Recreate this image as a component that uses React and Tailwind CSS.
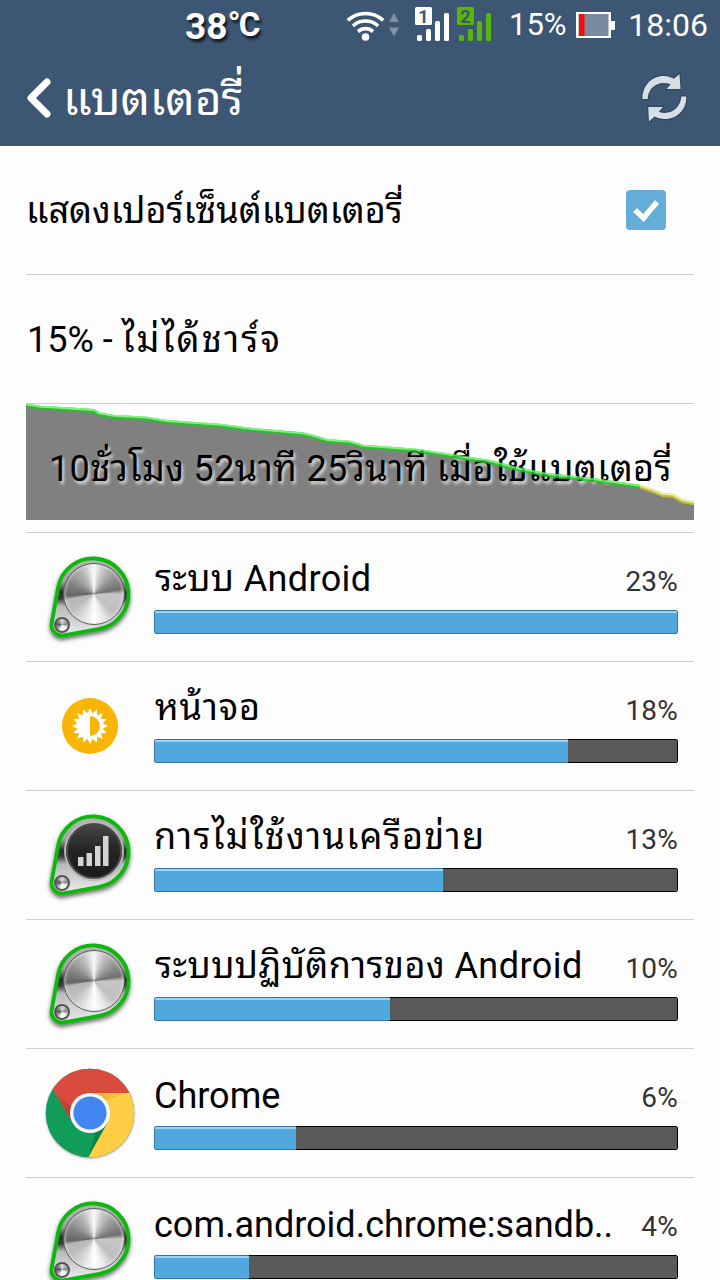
import React from "react";

const apps = [
  { name: "ระบบ Android", percent: 23, bar: 524, icon: "system", text: "pl-px tracking-[0.35px]" },
  { name: "หน้าจอ", percent: 18, bar: 414, icon: "screen", text: "pl-px tracking-[0.8px]" },
  { name: "การไม่ใช้งานเครือข่าย", percent: 13, bar: 289, icon: "network", text: "tracking-[1.3px]" },
  { name: "ระบบปฏิบัติการของ Android", percent: 10, bar: 236, icon: "system", text: "pl-px tracking-[0.45px]" },
  { name: "Chrome", percent: 6, bar: 142, icon: "chrome", text: "pt-px" },
  { name: "com.android.chrome:sandb..", percent: 4, bar: 95, icon: "system", text: "pt-px" },
];

function WifiIcon() {
  return (
    <svg className="h-[34px] w-[40px]" viewBox="0 0 40 34" fill="none" stroke="#fff" strokeWidth="3.6">
      <path d="M1.8 12.4a26 26 0 0 1 35.4 0" />
      <path d="M6.9 18a18.5 18.5 0 0 1 25.2 0" />
      <path d="M12 23.6a11 11 0 0 1 15 0" />
      <circle cx="19.5" cy="29" r="3.8" fill="#fff" stroke="none" />
    </svg>
  );
}

function DataArrows() {
  return (
    <svg className="ml-[2px] h-[26px] w-3" viewBox="0 0 12 26" fill="#8493a5" stroke="#5d7188" strokeWidth="0.8">
      <path d="M6 1l5 9H1z" />
      <path d="M1 15.500h10l-5 9z" />
    </svg>
  );
}

function SignalIcon({ sim, color }) {
  return (
    <svg className="h-[40px] w-[36px]" viewBox="0 -2 36 40" fill={color}>
      <rect x="0" y="0" width="17" height="18" rx="1.500" />
      <rect x="2" y="28" width="5" height="6" rx="1.500" />
      <rect x="11" y="22" width="5" height="12" rx="1.500" />
      <rect x="20" y="14" width="5" height="20" rx="1.500" />
      <rect x="29" y="6" width="5" height="28" rx="1.500" />
      <text x="8.500" y="15.500" textAnchor="middle" fontSize="18" fontWeight="700" fontFamily="Roboto, sans-serif" fill="#3d5673">
        {sim}
      </text>
    </svg>
  );
}

function BatteryIcon() {
  return (
    <svg className="h-[28px] w-[40px]" viewBox="0 0 40 28">
      <path d="M0 1h35v9h4v9h-4v8H0z" fill="#fff" />
      <rect x="2.500" y="3" width="30" height="22" fill="#778a9f" />
      <rect x="3" y="3" width="5.500" height="22" fill="#f70d06" />
    </svg>
  );
}

function RefreshIcon() {
  return (
    <svg className="h-[52px] w-[48px]" viewBox="0 0 48 52">
      <g stroke="#35465c" strokeWidth="2.400" strokeLinejoin="round" fill="#d7dfe6" paintOrder="stroke">
        <path d="M2.500 27C2 11 16.500 0 31 5.500l3 1.300 5.500-4.800 1 15H26.500l4.200-4.700C19 7.500 7.700 15.500 7.700 27z" />
        <path d="M46.200 24.500c.8 15.500-13.700 26.500-28.700 21.200l-2.900-1.300-5.600 5.100-.8-14.500H23l-4.300 4.700C29.500 44 41 36 41.200 24.500z" />
      </g>
    </svg>
  );
}

function KnobIcon({ network }) {
  return (
    <div className="relative h-24 w-[92px]">
      <svg className="absolute inset-0 h-24 w-[92px] overflow-visible" viewBox="0 0 92 96">
        <defs>
          <linearGradient id="plate" x1="0" y1="0" x2="0" y2="1">
            <stop offset="0" stopColor="#b5b5b5" />
            <stop offset="0.3" stopColor="#a2a2a2" />
            <stop offset="0.44" stopColor="#2c2c2c" />
            <stop offset="0.52" stopColor="#3c3c3c" />
            <stop offset="0.62" stopColor="#b9b9b9" />
            <stop offset="1" stopColor="#ededed" />
          </linearGradient>
          <filter id="shade" x="-20%" y="-20%" width="140%" height="150%">
            <feDropShadow dx="0" dy="2.500" stdDeviation="2.200" floodColor="#000" floodOpacity="0.6" />
          </filter>
        </defs>
        <path
          d="M14.100 38.700A35.500 35.500 0 1 1 55.300 79.900L19.900 86.300A10.500 10.500 0 0 1 7.700 74.100Z"
          fill="url(#plate)"
          stroke="#0cb80c"
          strokeWidth="3.800"
          filter="url(#shade)"
        />
      </svg>
      {network ? (
        <div className="absolute left-[22px] top-[16px] size-[56px] rounded-full border-2 border-[#4b4b4b] bg-linear-to-b from-[#464646] via-[#242424] to-[#1b1b1b] shadow-[0_0_0_2px_#b9b9b9]" />
      ) : (
        <div className="absolute left-[19px] top-[14px] size-[62px] rounded-full border border-[#5e5e5e] bg-[conic-gradient(#fafafa_0deg,#c9c9c9_18deg,#9c9c9c_45deg,#6f6f6f_80deg,#c6c6c6_90deg,#c0c0c0_135deg,#ececec_160deg,#fff_180deg,#dedede_205deg,#bcbcbc_235deg,#b8b8b8_258deg,#666_266deg,#858585_295deg,#bcbcbc_335deg,#fafafa_360deg)] shadow-[inset_0_0_2px_2px_rgba(230,230,230,0.4)]" />
      )}
      <div className="absolute left-[10px] top-[68px] size-4 rounded-full border-2 border-[#555] bg-[conic-gradient(#ddd,#888_80deg,#eee_120deg,#fff_190deg,#999_240deg,#555_280deg,#ddd)]" />
      {network && (
        <svg className="absolute left-[33px] top-[28px] h-8 w-8" viewBox="0 0 32 32" fill="#d4d4d4">
          <rect x="1" y="22" width="5.500" height="9" />
          <rect x="9.500" y="18" width="5.500" height="13" />
          <rect x="18" y="11" width="5.500" height="20" />
          <rect x="26" y="1" width="5.500" height="30" />
        </svg>
      )}
    </div>
  );
}

function BrightnessIcon() {
  const points = Array.from({ length: 32 }, (_, i) => {
    const r = i % 2 ? 13 : 18;
    const a = (i * Math.PI) / 16;
    return `${28 + r * Math.sin(a)},${28 - r * Math.cos(a)}`;
  }).join(" ");

  return (
    <svg className="size-14" viewBox="0 0 56 56">
      <circle cx="28" cy="28" r="28" fill="#f9b505" />
      <polygon points={points} fill="#fff" />
      <path d="M28 18a10 10 0 0 1 0 20z" fill="#f9b505" />
    </svg>
  );
}

function ChromeIcon() {
  return (
    <svg className="size-[90px] overflow-visible drop-shadow-[0_1px_1px_rgba(0,0,0,0.35)]" viewBox="-45 -45 90 90">
      <defs>
        <clipPath id="disc">
          <circle r="44.300" />
        </clipPath>
        <linearGradient id="redShade" x1="0" y1="0" x2="1" y2="0">
          <stop offset="0" stopColor="#d94b3d" />
          <stop offset="1" stopColor="#b53b30" />
        </linearGradient>
        <linearGradient id="yellowShade" x1="0" y1="0" x2="1" y2="0">
          <stop offset="0" stopColor="#e6a92b" />
          <stop offset="1" stopColor="#ffce44" />
        </linearGradient>
      </defs>
      <g clipPath="url(#disc)">
        <rect x="-45" y="-45" width="90" height="90" fill="#119d59" />
        <path d="M0-20H45V45H-2L17.300 10z" fill="#ffce44" />
        <path d="M0-20H38L14-12z" fill="url(#yellowShade)" />
        <path d="M-37.500-24L-45-45H45v25H0L-17.300 10z" fill="#d94b3d" />
        <path d="M-36.500-22.700L-20.500 4l2-10z" fill="url(#redShade)" />
        <path d="M17.300 10L-1 42 6 18z" fill="#0e8249" />
      </g>
      <circle r="20" fill="#f6f8fa" />
      <circle r="16.600" fill="#4285f0" />
    </svg>
  );
}

function AppIcon({ type }) {
  if (type === "screen") return <BrightnessIcon />;
  if (type === "chrome") return <ChromeIcon />;
  return <KnobIcon network={type === "network"} />;
}

const greenLine =
  "0,1.300 14,3.700 37,5 68,7 73,10.300 87,12.700 121,14.700 141,18 194,21.700 227,26 277,30.300 287,32.700 301,37 324,38.700 337,42.700 391,46.700 424,51.700 464,58 491,65 521,71 567,76 614,82.700";
const yellowLine = "614,82.700 627,87 637,91 647,91.700 656,97 668,99.300";

function BatteryChart({ children }) {
  return (
    <div className="relative h-[116px]">
      <svg className="h-[116px] w-[668px]" viewBox="0 0 668 116">
        <polygon points={`${greenLine} ${yellowLine} 668,116 0,116`} fill="#808080" />
      </svg>
      {children}
      <svg className="absolute inset-0 h-[116px] w-[668px]" viewBox="0 0 668 116" fill="none" opacity="0.8">
        <polyline points={greenLine} stroke="#1fca1f" strokeWidth="4" />
        <polyline points={greenLine} stroke="#63f063" strokeWidth="1.800" transform="translate(0 -1)" />
        <polyline points={yellowLine} stroke="#cfc93b" strokeWidth="4" />
        <polyline points={yellowLine} stroke="#eee873" strokeWidth="1.800" transform="translate(0 -1)" />
      </svg>
    </div>
  );
}

function AppRow({ app }) {
  const full = app.bar === 524;

  return (
    <li className="flex h-[129px] shrink-0 border-b border-[#cecece]">
      <div className="flex h-[128px] w-32 shrink-0 items-center justify-center">
        <AppIcon type={app.icon} />
      </div>
      <div className="w-[524px] pt-[21px]">
        <div className="flex h-[56px] items-start justify-between whitespace-nowrap">
          <span className={`text-[36px] leading-[50px] text-black ${app.text}`}>{app.name}</span>
          <span className="pt-[3px] text-[28px] leading-[50px] tracking-[0.2px] text-[#333]">{app.percent}%</span>
        </div>
        <div className="flex h-6 overflow-hidden rounded-[2px]">
          <div
            className={`h-6 rounded-l-[2px] border border-[#3674a6] bg-[#51a8df] shadow-[inset_0_2px_0_#9bd3f7] ${full ? "rounded-r-[2px]" : "border-r-0"}`}
            style={{ width: app.bar }}
          />
          {!full && <div className="h-6 flex-1 rounded-r-[2px] border border-l-0 border-black bg-[#5a5a5a]" />}
        </div>
      </div>
    </li>
  );
}

export default function App() {
  return (
    <div className="flex h-[1280px] w-[720px] flex-col overflow-hidden bg-[#fdfdfd] font-[Roboto,'Noto_Sans_Thai_Looped','Droid_Sans_Thai',Loma,Waree,Garuda,'Noto_Sans_Thai',sans-serif]">
      {/* Status bar + title */}
      <header className="h-[146px] shrink-0 bg-[#3d5673] text-white">
        <div className="flex h-[50px] items-center pl-[185px] pr-3">
          <div className="flex w-[161px] items-start pt-1 font-bold [text-shadow:2px_3px_3px_rgba(0,0,0,0.75)]">
            <span className="text-[37px] leading-[46px]">38</span>
            <span className="text-[34px] leading-[38px]">°</span>
            <span className="-ml-[2px] text-[33px] leading-[41px]">C</span>
          </div>
          <WifiIcon />
          <DataArrows />
          <div className="ml-[15px] flex gap-[6px]">
            <SignalIcon sim="1" color="#fff" />
            <SignalIcon sim="2" color="#57b60b" />
          </div>
          <span className="ml-4 text-[31px] leading-[50px]">15%</span>
          <div className="ml-[9px]">
            <BatteryIcon />
          </div>
          <span className="ml-auto text-[32px] leading-[50px]">18:06</span>
        </div>
        <div className="flex h-24 items-center justify-between pl-[26px] pr-8">
          <div className="flex items-center">
            <svg className="h-[42px] w-[27px]" viewBox="0 0 27 42" fill="none" stroke="#fff" strokeWidth="7" strokeLinecap="round" strokeLinejoin="round">
              <path d="M21 5L5 21l16 16" />
            </svg>
            <h1 className="ml-[10px] pt-px text-[46px] leading-[96px]">แบตเตอรี่</h1>
          </div>
          <RefreshIcon />
        </div>
      </header>

      <main className="px-[26px] text-[36px] text-black">
        <div className="flex h-[129px] items-center justify-between border-b border-[#cecece] pr-7">
          <span className="pt-[2px]">แสดงเปอร์เซ็นต์แบตเตอรี่</span>
          <span className="flex size-10 items-center justify-center rounded-[4px] bg-[#64add8]">
            <svg className="size-7" viewBox="0 0 28 28" fill="none" stroke="#fff" strokeWidth="5.500">
              <path d="M3 14l8.500 8L25 6" />
            </svg>
          </span>
        </div>
        <div className="flex h-[129px] items-center whitespace-pre border-b border-[#cecece] pl-px pt-[2px]">
          15% - <span className="tracking-[2.2px]">ไม่ได้ชาร์จ</span>
        </div>
        <div className="h-[129px] border-b border-[#cecece]">
          <BatteryChart>
            <p className="absolute left-[23px] top-[38px] whitespace-nowrap leading-[54px] tracking-[0.37px] [text-shadow:2px_3px_3px_rgba(255,255,255,0.7)]">
              10ชั่วโมง 52นาที 25วินาที เมื่อใช้แบตเตอรี่
            </p>
          </BatteryChart>
        </div>
        <ul>
          {apps.map((app) => (
            <AppRow key={app.name} app={app} />
          ))}
        </ul>
      </main>
    </div>
  );
}
